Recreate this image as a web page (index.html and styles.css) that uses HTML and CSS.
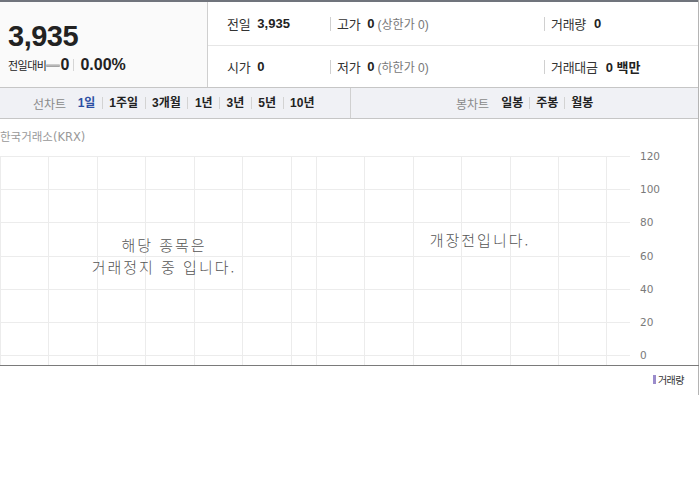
FILE: index.html
```html
<!DOCTYPE html>
<html lang="ko">
<head>
<meta charset="utf-8">
<link rel="stylesheet" href="styles.css">
</head>
<body>
<div class="wrap">
  <div class="summary">
    <div class="now">
      <div class="price">3,935</div>
      <div class="change">
        <span class="lbl">전일대비</span>
        <span class="flat"></span>
        <span class="num">0</span>
        <span class="vsep"></span>
        <span class="num">0.00%</span>
      </div>
    </div>
    <div class="stats">
      <div class="row">
        <div class="cell c1"><span class="k">전일</span><span class="v">3,935</span></div>
        <div class="cell c2"><span class="k">고가</span><span class="v">0</span><span class="sub">(상한가 0)</span></div>
        <div class="cell c3"><span class="k">거래량</span><span class="v">0</span></div>
      </div>
      <div class="row">
        <div class="cell c1"><span class="k">시가</span><span class="v">0</span></div>
        <div class="cell c2"><span class="k">저가</span><span class="v">0</span><span class="sub">(하한가 0)</span></div>
        <div class="cell c3"><span class="k">거래대금</span><span class="v">0 백만</span></div>
      </div>
    </div>
  </div>
  <div class="tabs">
    <div class="tabgroup line">
      <span class="tlabel">선차트</span>
      <span class="tab on">1일</span><span class="tab">1주일</span><span class="tab">3개월</span><span class="tab">1년</span><span class="tab">3년</span><span class="tab">5년</span><span class="tab">10년</span>
    </div>
    <div class="tabgroup candle">
      <span class="tlabel">봉차트</span>
      <span class="tab">일봉</span><span class="tab">주봉</span><span class="tab">월봉</span>
    </div>
  </div>
  <div class="chart">
    <div class="source">한국거래소(KRX)</div>
    <svg class="grid" width="699" height="210" viewBox="0 0 699 210">
      <g stroke="#ececec" stroke-width="1">
        <line x1="0" y1="0.5" x2="630" y2="0.5"/>
        <line x1="0" y1="33.5" x2="630" y2="33.5"/>
        <line x1="0" y1="66.5" x2="630" y2="66.5"/>
        <line x1="0" y1="100.5" x2="630" y2="100.5"/>
        <line x1="0" y1="133.5" x2="630" y2="133.5"/>
        <line x1="0" y1="166.5" x2="630" y2="166.5"/>
        <line x1="0" y1="199.5" x2="630" y2="199.5"/>
        <line x1="0.5" y1="0" x2="0.5" y2="209"/>
        <line x1="48.5" y1="0" x2="48.5" y2="209"/>
        <line x1="97.5" y1="0" x2="97.5" y2="209"/>
        <line x1="145.5" y1="0" x2="145.5" y2="209"/>
        <line x1="194.5" y1="0" x2="194.5" y2="209"/>
        <line x1="242.5" y1="0" x2="242.5" y2="209"/>
        <line x1="291.5" y1="0" x2="291.5" y2="209"/>
        <line x1="316.5" y1="0" x2="316.5" y2="209"/>
        <line x1="364.5" y1="0" x2="364.5" y2="209"/>
        <line x1="413.5" y1="0" x2="413.5" y2="209"/>
        <line x1="461.5" y1="0" x2="461.5" y2="209"/>
        <line x1="510.5" y1="0" x2="510.5" y2="209"/>
        <line x1="558.5" y1="0" x2="558.5" y2="209"/>
        <line x1="606.5" y1="0" x2="606.5" y2="209"/>
      </g>
      <line x1="0" y1="209.5" x2="699" y2="209.5" stroke="#7a7a7a" stroke-width="1"/>
      <g class="ylab">
        <text x="640" y="4">120</text>
        <text x="640" y="37">100</text>
        <text x="640" y="70">80</text>
        <text x="640" y="104">60</text>
        <text x="640" y="137">40</text>
        <text x="640" y="170">20</text>
        <text x="640" y="203">0</text>
      </g>
    </svg>
    <div class="msg halt">해당 종목은<br>거래정지 중 입니다.</div>
    <div class="msg pre">개장전입니다.</div>
  </div>
  <div class="legend"><span class="swatch"></span>거래량</div>
</div>
</body>
</html>
```

FILE: styles.css
```css
html, body {
  margin: 0;
  padding: 0;
  background: #fff;
}
body {
  font-family: "Liberation Sans", "Noto Sans CJK KR", sans-serif;
  color: #222;
}
.wrap {
  width: 698px;
  border-right: 1px solid #b4b4b4;
}
.summary {
  display: flex;
  height: 85px;
  border-top: 2px solid #70747c;
}
.now {
  width: 208px;
  background: #fafafa;
  border-right: 1px solid #cfcfcf;
  padding: 18px 0 0 8px;
  box-sizing: border-box;
}
.price {
  font-size: 29px;
  font-weight: bold;
  letter-spacing: -0.5px;
  line-height: 32px;
  color: #222;
}
.change {
  display: flex;
  align-items: center;
  margin-top: 4px;
  height: 18px;
}
.change .lbl {
  font-size: 11px;
  letter-spacing: -0.5px;
  color: #222;
}
.flat {
  width: 14px;
  height: 3px;
  margin: 0;
  background: linear-gradient(#d6d6d6, #9a9a9a);
  border-radius: 1px;
}
.change .num {
  font-size: 16px;
  font-weight: bold;
  color: #222;
}
.vsep {
  width: 1px;
  height: 12px;
  background: #d6d6d6;
  margin: 0 6px 0 4px;
}
.stats {
  flex: 1;
  display: flex;
  flex-direction: column;
}
.row {
  display: flex;
  align-items: center;
  height: 44px;
}
.row + .row {
  height: 41px;
  border-top: 1px solid #e6e6e6;
}
.cell {
  display: flex;
  align-items: center;
  font-size: 13px;
  height: 14px;
}
.cell .k {
  color: #333;
  letter-spacing: -0.3px;
}
.cell .v {
  font-weight: bold;
  margin-left: 7px;
  color: #222;
}
.cell .sub {
  font-size: 12px;
  color: #777;
  margin-left: 3px;
}
.c1 {
  width: 103px;
  padding-left: 19px;
}
.c2 {
  width: 207px;
  border-left: 1px solid #d0d0d0;
  padding-left: 6px;
}
.c3 {
  border-left: 1px solid #d0d0d0;
  padding-left: 6px;
}
.c3 .v {
  margin-left: 8px;
}
.tabs {
  display: flex;
  height: 30px;
  background: #f0f1f5;
  border-top: 1px solid #c6c6c6;
  border-bottom: 1px solid #c6c6c6;
}
.tabgroup {
  display: flex;
  align-items: center;
  font-size: 12px;
}
.line {
  width: 351px;
  border-right: 1px solid #d0d0d0;
  padding-left: 33px;
  box-sizing: border-box;
}
.candle {
  flex: 1;
  padding-left: 105px;
}
.tlabel {
  color: #8a8a8a;
  margin-right: 5px;
}
.tab {
  font-weight: bold;
  color: #222;
  padding: 0 6.5px;
  line-height: 12px;
  border-left: 1px solid #d3d3d3;
}
.candle .tlabel {
  margin-right: 6px;
}
.candle .tab {
  padding: 0 6px;
}
.tlabel + .tab {
  border-left: 0;
}
.tab.on {
  color: #2d4fa3;
}
.chart {
  position: relative;
  height: 246px;
}
.source {
  font-family: "DejaVu Sans", "Noto Sans CJK KR", sans-serif;
  font-size: 11.5px;
  color: #999;
  height: 37px;
  line-height: 37px;
  padding-left: 0;
}
.grid {
  display: block;
  width: 699px;
  overflow: visible;
}
.ylab text {
  font-family: "DejaVu Sans", sans-serif;
  font-size: 10.5px;
  fill: #7a7a7a;
}
.msg {
  position: absolute;
  font-family: "Noto Sans CJK KR", sans-serif;
  font-weight: 300;
  font-size: 15px;
  line-height: 22px;
  letter-spacing: 2px;
  color: #555;
  text-align: center;
}
.halt {
  left: 63px;
  width: 202px;
  top: 115px;
}
.pre {
  left: 379px;
  width: 202px;
  top: 110px;
}
.legend {
  display: flex;
  justify-content: flex-end;
  align-items: center;
  height: 28px;
  padding-right: 14px;
  padding-bottom: 2px;
  font-family: "Noto Sans CJK KR", sans-serif;
  font-size: 10px;
  color: #333;
  letter-spacing: -0.5px;
}
.swatch {
  width: 3px;
  height: 9px;
  background: #9b8ccb;
  margin-right: 2px;
}
```
